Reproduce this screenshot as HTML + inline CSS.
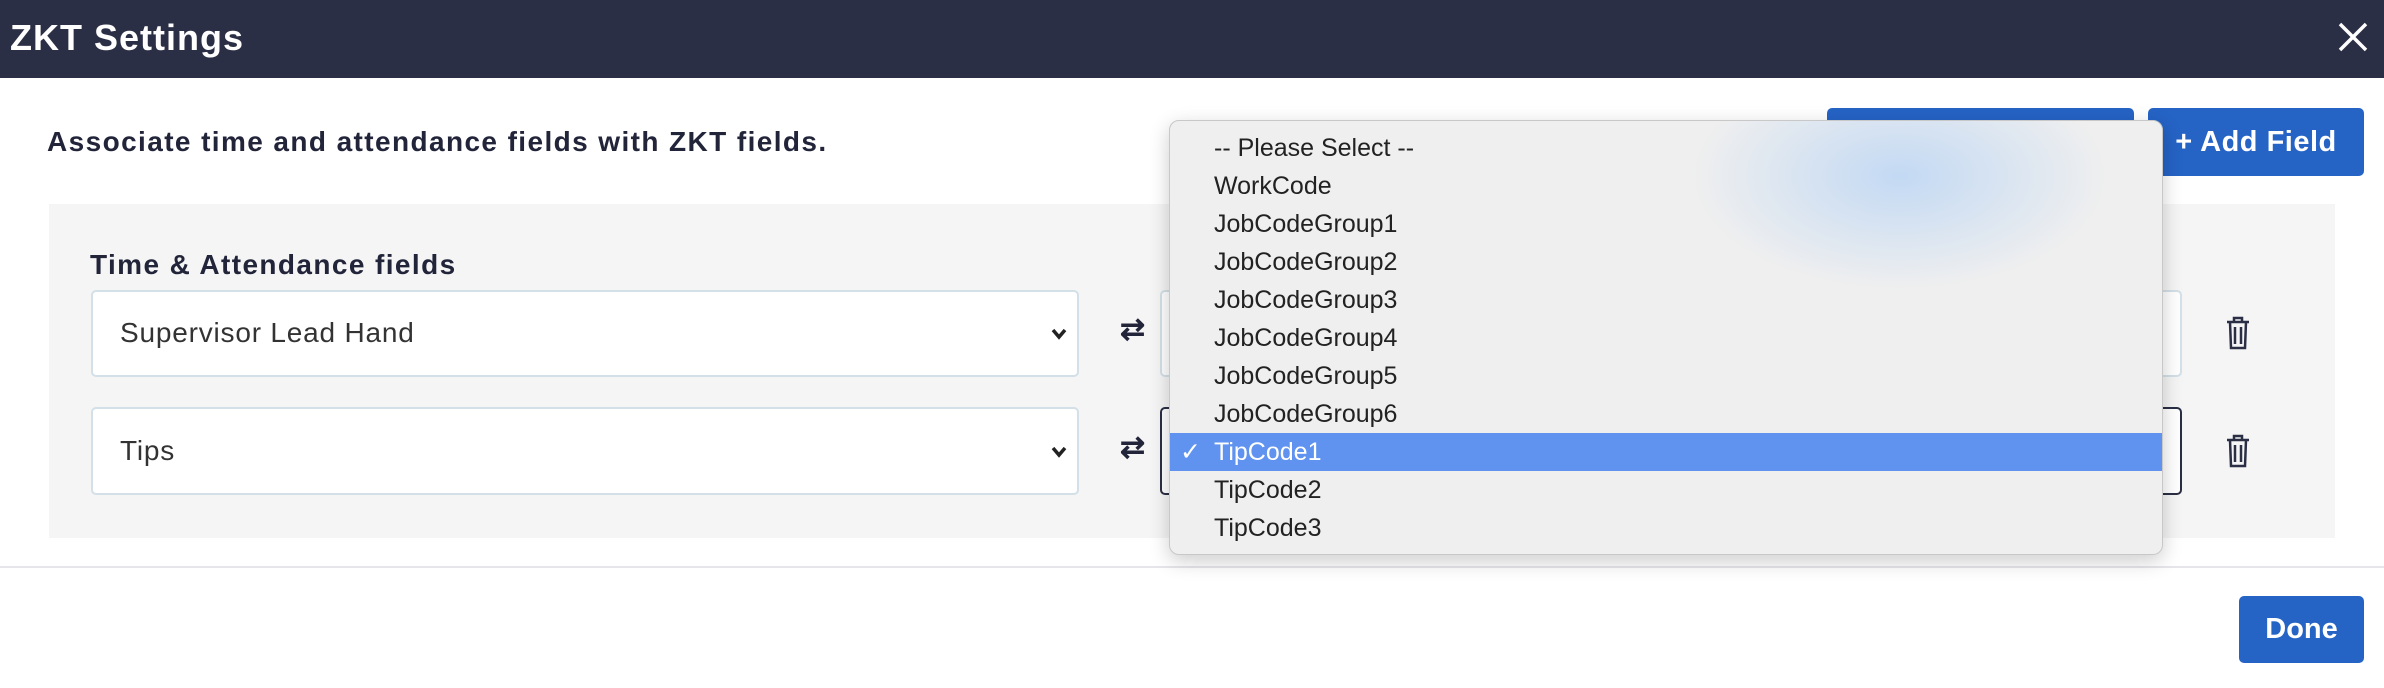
<!DOCTYPE html>
<html><head><style>
body{margin:0;width:2384px;height:688px;position:relative;background:#fff;font-family:"Liberation Sans",sans-serif;overflow:hidden}
.hdr{position:absolute;left:0;top:0;width:2384px;height:78px;background:#2b2f45}
.abs{position:absolute}
.sel{position:absolute;background:#fff;border:2px solid #d3e0e8;border-radius:5px;box-sizing:border-box}
.btn{position:absolute;background:#2563c5;border-radius:5px;color:#fff;font-weight:bold}
.dd{position:absolute;left:1169px;top:120px;width:994px;height:435px;background:#efefef;border:1px solid #c8c8c8;border-radius:10px;box-shadow:0 6px 20px rgba(0,0,0,.2);box-sizing:border-box;overflow:hidden}
.it{position:absolute;left:0;width:100%;height:38px;line-height:38px;font-size:25px;color:#222;padding-left:44px;box-sizing:border-box}
.lbl{font-size:28px;font-weight:bold;letter-spacing:1.4px;color:#22253a}
.stx{font-size:28px;color:#333;letter-spacing:0.8px}
</style></head><body>
<div class="hdr"></div>
<div class="abs" style="left:10px;top:17px;color:#fff;font-size:36px;font-weight:bold;letter-spacing:1px">ZKT Settings</div>
<svg class="abs" style="left:2338px;top:22px" width="30" height="30" viewBox="0 0 30 30" stroke="#fff" stroke-width="3.5"><path d="M2 2L28 28M28 2L2 28"/></svg>
<div class="abs lbl" style="left:47px;top:126px">Associate time and attendance fields with ZKT fields.</div>
<div class="btn" style="left:1827px;top:108px;width:307px;height:68px"></div>
<div class="btn" style="left:2148px;top:108px;width:216px;height:68px;font-size:29px;line-height:68px;text-align:center;letter-spacing:0.5px">+ Add Field</div>
<div class="abs" style="left:49px;top:204px;width:2286px;height:334px;background:#f5f5f5"></div>
<div class="abs lbl" style="left:90px;top:249px">Time &amp; Attendance fields</div>
<div class="sel" style="left:91px;top:290px;width:988px;height:87px"><span class="abs stx" style="left:27px;top:25px">Supervisor Lead Hand</span>
<svg class="abs" style="left:958px;top:36px" width="16" height="12" viewBox="0 0 16 12" fill="none" stroke="#222" stroke-width="3.5"><path d="M2 2l6 7 6-7"/></svg></div>
<div class="sel" style="left:91px;top:407px;width:988px;height:88px"><span class="abs stx" style="left:27px;top:26px">Tips</span>
<svg class="abs" style="left:958px;top:37px" width="16" height="12" viewBox="0 0 16 12" fill="none" stroke="#222" stroke-width="3.5"><path d="M2 2l6 7 6-7"/></svg></div>
<div class="abs" style="left:1120px;top:312px;font-size:30px;color:#22253a;font-weight:bold">⇄</div>
<div class="abs" style="left:1120px;top:430px;font-size:30px;color:#22253a;font-weight:bold">⇄</div>
<div class="sel" style="left:1160px;top:290px;width:1022px;height:87px"></div>
<div class="sel" style="left:1160px;top:407px;width:1022px;height:88px;border-color:#2b2f45"></div>
<svg class="abs" style="left:2225px;top:316px" width="26" height="34" viewBox="0 0 26 34" fill="none" stroke="#2b2f45" stroke-width="2.5"><path d="M2 6h22M9 6V2h8v4M5 6l1 26h14l1-26M10 11v17M16 11v17"/></svg>
<svg class="abs" style="left:2225px;top:434px" width="26" height="34" viewBox="0 0 26 34" fill="none" stroke="#2b2f45" stroke-width="2.5"><path d="M2 6h22M9 6V2h8v4M5 6l1 26h14l1-26M10 11v17M16 11v17"/></svg>
<div class="abs" style="left:0;top:566px;width:2384px;height:2px;background:#e6e6ea"></div>
<div class="btn" style="left:2239px;top:596px;width:125px;height:67px;font-size:29px;line-height:67px;text-align:center">Done</div>
<div class="dd">
<div class="abs" style="left:520px;top:-60px;width:420px;height:230px;background:radial-gradient(ellipse at center,rgba(180,210,245,.75),rgba(239,239,239,0) 70%)"></div>
<div class="it" style="top:8px">-- Please Select --</div>
<div class="it" style="top:46px">WorkCode</div>
<div class="it" style="top:84px">JobCodeGroup1</div>
<div class="it" style="top:122px">JobCodeGroup2</div>
<div class="it" style="top:160px">JobCodeGroup3</div>
<div class="it" style="top:198px">JobCodeGroup4</div>
<div class="it" style="top:236px">JobCodeGroup5</div>
<div class="it" style="top:274px">JobCodeGroup6</div>
<div class="it" style="top:312px;background:#5f93ef;color:#fff"><span class="abs" style="left:10px">✓</span>TipCode1</div>
<div class="it" style="top:350px">TipCode2</div>
<div class="it" style="top:388px">TipCode3</div>
</div>
</body></html>
